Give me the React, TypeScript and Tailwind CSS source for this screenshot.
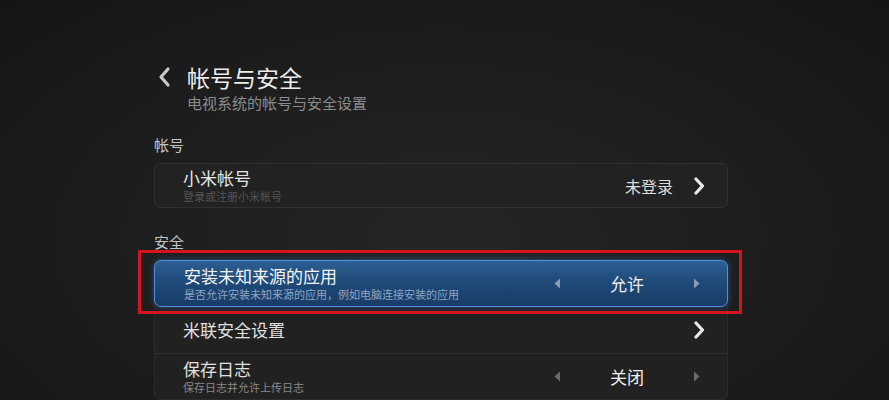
const font = { fontFamily: '"Noto Sans CJK SC", "Noto Sans", sans-serif' }

const Chevron = ({ className }: { className?: string }) => (
    <svg width="12" height="18" viewBox="0 0 12 18" className={className}>
        <path d="M3 2 L9.5 9 L3 16" fill="none" stroke="currentColor" strokeWidth="3.2" strokeLinecap="round" strokeLinejoin="round" />
    </svg>
)

const Arrow = ({ dir, color }: { dir: 'left' | 'right'; color: string }) => (
    <svg width="7" height="11" viewBox="0 0 7 11">
        <path d={dir === 'left' ? 'M6 0.5 L0.5 5.5 L6 10.5 Z' : 'M1 0.5 L6.5 5.5 L1 10.5 Z'} fill={color} />
    </svg>
)

const Picker = ({ value, arrow }: { value: string; arrow: string }) => (
    <div className="flex w-[146px] items-center justify-between">
        <Arrow dir="left" color={arrow} />
        <span className="text-[17px] leading-5 text-[#f0f0f0]">{value}</span>
        <Arrow dir="right" color={arrow} />
    </div>
)

const App = () => {
    return (
        <div
            style={font}
            className="relative h-[400px] w-[889px] overflow-hidden bg-[radial-gradient(ellipse_at_50%_60%,#252525_0%,#1d1d1d_55%,#151515_100%)]"
        >
            <div className="ml-[154px] flex w-[574px] flex-col pt-[63px]">
                {/* header */}
                <div className="flex items-center">
                    <svg width="14" height="22" viewBox="0 0 14 22" className="ml-[3px] text-[#c8c8c8]">
                        <path d="M11 3 L4 11 L11 19" fill="none" stroke="currentColor" strokeWidth="3.2" strokeLinecap="round" strokeLinejoin="round" />
                    </svg>
                    <h1 className="ml-[16px] text-[23px] leading-[28px] text-[#ececec]">帐号与安全</h1>
                </div>
                <p className="mt-[2px] pl-[33px] text-[15px] leading-5 text-[#8c8c8c]">电视系统的帐号与安全设置</p>

                {/* account */}
                <div className="mt-[22px] text-[15px] leading-5 text-[#c4c4c4]">帐号</div>
                <div className="mt-[8px] flex h-[45px] items-center justify-between rounded-[6px] border border-[#303030] bg-[#222222] pl-[28px] pr-[22px]">
                    <div className="flex flex-col">
                        <span className="text-[17px] leading-5 text-[#e6e6e6]">小米帐号</span>
                        <span className="mt-[2px] text-[11px] leading-[13px] text-[#555555]">登录或注册小米帐号</span>
                    </div>
                    <div className="flex items-center gap-[20px]">
                        <span className="text-[16px] leading-5 text-[#dcdcdc]">未登录</span>
                        <Chevron className="text-[#e8e8e8]" />
                    </div>
                </div>

                {/* security */}
                <div className="mt-[24px] text-[15px] leading-5 text-[#c4c4c4]">安全</div>
                <div className="relative mt-[8px] rounded-[6px] border border-[#2c2c2c] bg-[#212121]">
                    <div className="-mx-px -mt-px flex h-[47px] items-center justify-between rounded-[7px] border border-[#4f8fe0] bg-[linear-gradient(180deg,#2d5f93_0%,#1f4a7a_45%,#183c66_100%)] pl-[29px] pr-[27px] shadow-[0_0_6px_rgba(60,120,220,0.5)]">
                        <div className="flex flex-col">
                            <span className="text-[17px] leading-5 text-[#f4f4f4]">安装未知来源的应用</span>
                            <span className="mt-[2px] text-[11px] leading-[13px] text-[#8ea6c2]">是否允许安装未知来源的应用，例如电脑连接安装的应用</span>
                        </div>
                        <Picker value="允许" arrow="#8e9bb0" />
                    </div>
                    <div className="flex h-[47px] items-center justify-between border-b border-[#303030] pl-[28px] pr-[22px]">
                        <span className="text-[17px] leading-5 text-[#e0e0e0]">米联安全设置</span>
                        <Chevron className="text-[#e8e8e8]" />
                    </div>
                    <div className="flex h-[45px] items-center justify-between pl-[28px] pr-[27px]">
                        <div className="flex flex-col">
                            <span className="text-[17px] leading-5 text-[#e0e0e0]">保存日志</span>
                            <span className="mt-[2px] text-[11px] leading-[13px] text-[#8a8a8a]">保存日志并允许上传日志</span>
                        </div>
                        <Picker value="关闭" arrow="#6a6a6a" />
                    </div>

                    {/* annotation */}
                    <div className="pointer-events-none absolute left-[-17px] top-[-11px] h-[64px] w-[604px] border-[3px] border-[#d5141e]" />
                </div>
            </div>
        </div>
    )
}

export default App
